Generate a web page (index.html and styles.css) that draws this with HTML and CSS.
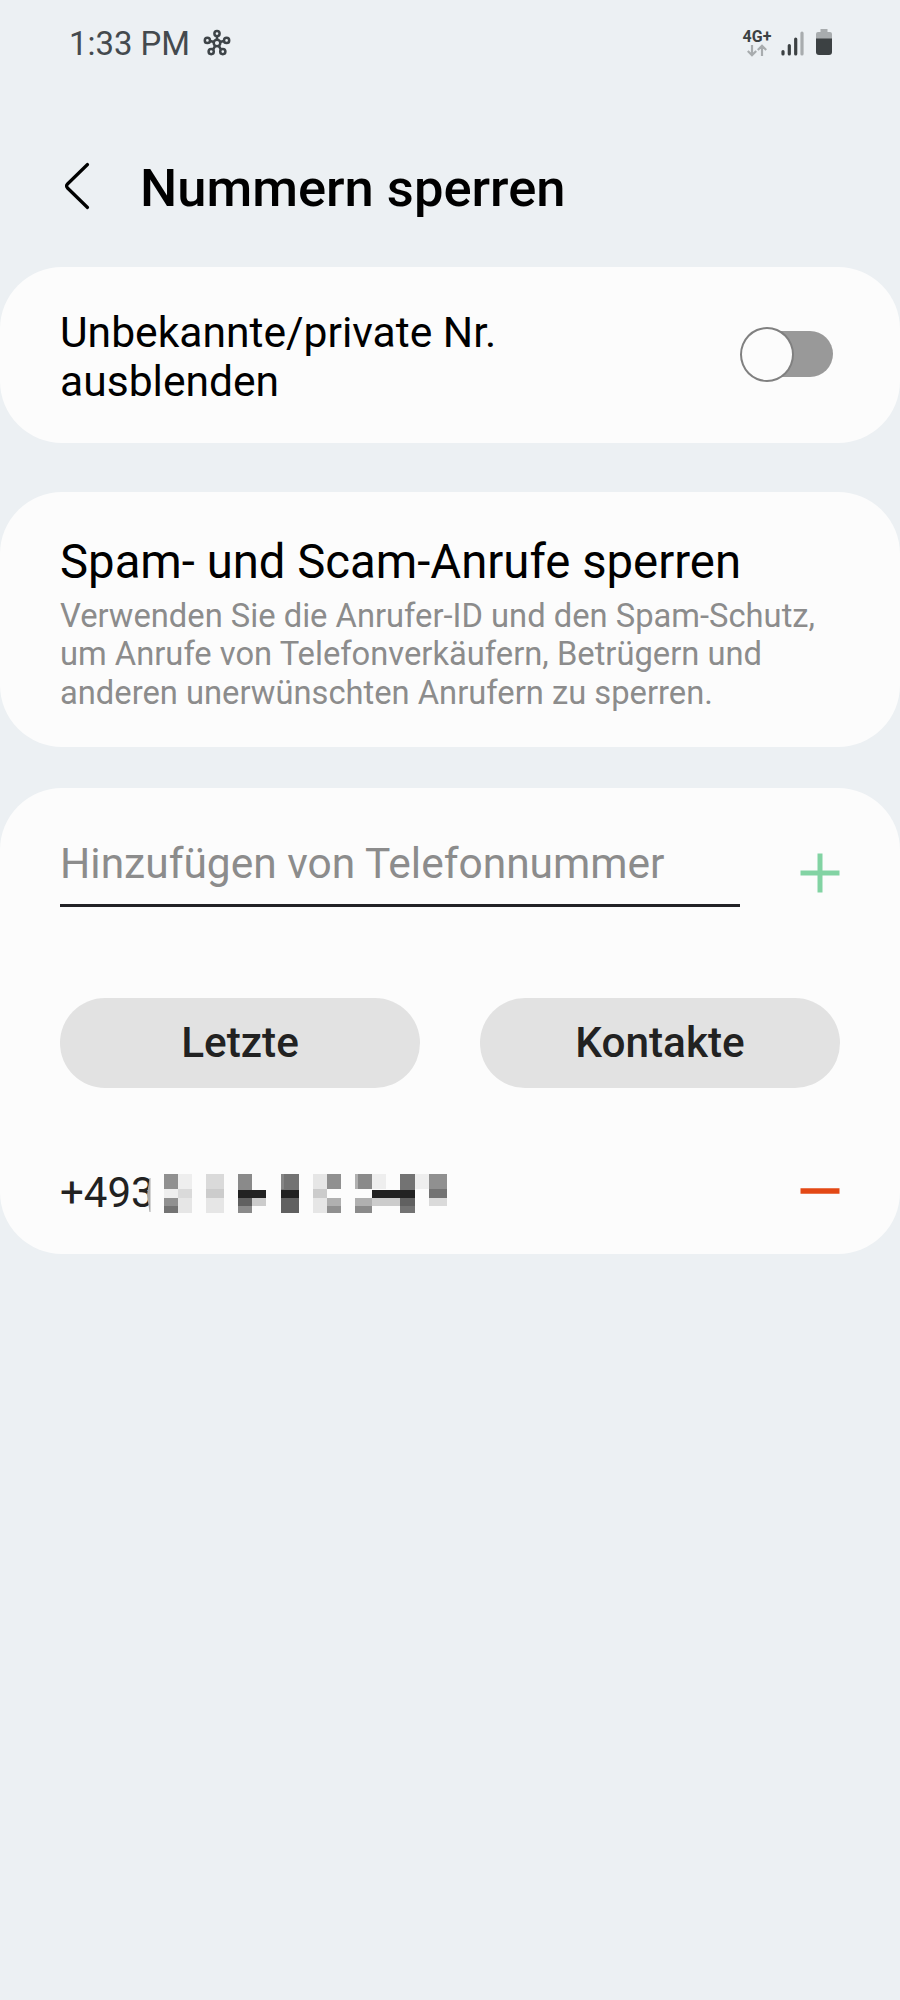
FILE: index.html
```html
<!DOCTYPE html>
<html lang="de">
<head>
<meta charset="utf-8">
<title>Nummern sperren</title>
<link rel="stylesheet" href="styles.css">
</head>
<body>
<div class="status">
  <span class="time">1:33 PM</span>
  <svg class="hub" width="28" height="28" viewBox="0 0 28 28">
    <path d="M14 11V7M11.300 13L7 12M16.700 13L21 12M12.500 16.500L10 20.500M15.500 16.500L18 20.500"/>
    <circle cx="14" cy="14" r="3.3"/><circle cx="14" cy="4.6" r="2.6"/><circle cx="4.4" cy="11.400" r="2.6"/><circle cx="23.600" cy="11.400" r="2.6"/><circle cx="8.200" cy="22.600" r="2.6"/><circle cx="19.800" cy="22.600" r="2.6"/>
  </svg>
  <div class="network">
    <span class="network-type">4G+</span>
    <svg class="arrows" width="20" height="13" viewBox="0 0 20 13"><path d="M5 1v10M.8 7L5 11.200 9.200 7M15 12V2M10.800 6L15 1.800 19.200 6"/></svg>
  </div>
  <svg class="signal" width="24" height="26" viewBox="0 0 24 26">
    <path class="on" d="M2 21.500v2.500M8.300 15.500v8.500M14.700 9v15"/><path class="off" d="M21 3v21"/>
  </svg>
  <svg class="battery" width="18" height="28" viewBox="0 0 18 28">
    <path class="cell" d="M5.500 1h7v3H15a2 2 0 0 1 2 2v5H1V6a2 2 0 0 1 2-2h2.500z"/>
    <path class="charge" d="M1 10.500h16V24a3 3 0 0 1-3 3H4a3 3 0 0 1-3-3z"/>
  </svg>
</div>
<header class="header">
  <svg class="back" width="28" height="50" viewBox="0 0 28 50"><path d="M24.500 3.500L4.500 23Q2.500 25 4.500 27L24.500 46.500"/></svg>
  <h1 class="title">Nummern sperren</h1>
</header>
<main>
  <section class="card hide-card">
    <p class="hide-label">Unbekannte/private Nr.<br>ausblenden</p>
    <div class="toggle"><div class="thumb"></div></div>
  </section>
  <section class="card spam-card">
    <h2 class="spam-title">Spam- und Scam-Anrufe sperren</h2>
    <p class="spam-text">Verwenden Sie die Anrufer-ID und den Spam-Schutz,<br>um Anrufe von Telefonverkäufern, Betrügern und<br>anderen unerwünschten Anrufern zu sperren.</p>
  </section>
  <section class="card numbers-card">
    <div class="add-row">
      <div class="field"><span class="field-text">Hinzufügen von Telefonnummer</span></div>
      <svg class="plus" width="40" height="40" viewBox="0 0 40 40"><path d="M.5 20h39M20 .5v39"/></svg>
    </div>
    <div class="buttons">
      <div class="button"><span class="letzte">Letzte</span></div>
      <div class="button"><span class="kontakte">Kontakte</span></div>
    </div>
    <div class="number-row">
      <span class="number">+493</span>
      <svg class="mosaic" width="302" height="44" viewBox="146 1172 302 44" shape-rendering="crispEdges">
        <path fill="#fcfcfc" d="M150 1172h14v44h-14z"/>
        <path fill="#aaa" shape-rendering="auto" d="M149.500 1178L147 1195L149.500 1212h1v-34z"/>
        <path fill="#909090" d="M164 1174h14v15h-14zM164 1198h14v8h-14zM327 1174h14v15h-14zM429 1174h18v15h-18zM327 1206h14v7h-14z"/>
        <path fill="#eee" d="M164 1189h14v9h-14zM178 1174h14v15h-14zM415 1174h14v15h-14zM372 1174h14v15h-14z"/>
        <path fill="#737373" d="M164 1206h14v7h-14zM281 1174h18v16h-18zM400 1174h15v16h-15zM400 1206h15v7h-15zM429 1189h18v9h-18z"/>
        <path fill="#dadada" d="M178 1189h14v9h-14zM206 1174h18v15h-18zM429 1198h18v8h-18z"/>
        <path fill="#e6e6e6" d="M178 1198h14v15h-14zM206 1198h18v15h-18zM313 1174h14v15h-14zM313 1198h14v15h-14z"/>
        <path fill="#ccc" d="M206 1189h18v9h-18zM313 1189h14v9h-14zM252 1198h14v8h-14zM372 1198h28v8h-28z"/>
        <path fill="#8a8a8a" d="M238 1174h14v16h-14zM238 1206h14v7h-14zM355 1174h17v15h-17zM355 1206h17v7h-17z"/>
        <path fill="#222" d="M238 1190h28v8h-28zM281 1190h18v8h-18zM372 1190h43v8h-43z"/>
        <path fill="#606060" d="M238 1198h14v8h-14zM281 1198h18v15h-18zM400 1198h15v8h-15z"/>
        <path fill="#b0b0b0" d="M327 1198h14v8h-14zM355 1198h17v8h-17zM355 1174h3v15h-3z"/>
        <path fill="#858585" d="M281 1174h3v15h-3z"/>
      </svg>
      <svg class="minus" width="40" height="6" viewBox="0 0 40 6"><path d="M.5 3h39"/></svg>
    </div>
  </section>
</main>
</body>
</html>
```
FILE: styles.css
```css
* { box-sizing: border-box; margin: 0; padding: 0; }
body {
  width: 900px;
  height: 2000px;
  background: #ecf0f3;
  color: #000;
  font-family: Roboto, sans-serif;
}
svg { display: block; flex: none; fill: none; }
span, h1, h2, p { white-space: nowrap; }
.status {
  display: flex;
  align-items: center;
  height: 87px;
  padding: 0 67px 0 69px;
  color: #444a4e;
}
.time { width: 120px; font-size: 32.900px; }
.hub { margin-left: 14px; margin-top: -2px; stroke: #3e4448; stroke-width: 2.5; }
.network { display: flex; flex-direction: column; align-items: center; width: 28px; margin: -2px 0 0 auto; }
.network-type { font-size: 16px; line-height: 15px; font-weight: 700; color: #3c4143; }
.arrows { stroke: #a8acae; stroke-width: 2.2; }
.signal { margin-left: 10px; margin-top: -1px; stroke-width: 3.2; stroke-linecap: round; }
.on { stroke: #3c4143; }
.off { stroke: #a8acae; }
.battery { margin-left: 10px; margin-top: -3px; }
.cell { fill: #a8acae; }
.charge { fill: #3c4143; }
.header {
  display: flex;
  align-items: center;
  height: 179.500px;
  padding: 23px 0 0 63px;
}
.back { margin-top: -4px; stroke: #000; stroke-width: 3.2; stroke-linecap: round; }
.title { margin-left: 49px; font-size: 52.500px; line-height: 60px; font-weight: 500; }
.card { background: #fcfcfc; border-radius: 62px; }
.hide-card {
  display: flex;
  align-items: center;
  justify-content: space-between;
  height: 176px;
  padding: 0 67.500px 0 60px;
}
.hide-label { padding-top: 5px; font-size: 42.600px; line-height: 49px; }
.toggle {
  display: flex;
  align-items: center;
  width: 86px;
  height: 46px;
  margin-top: -1px;
  border-radius: 23px;
  background: #999;
}
.thumb {
  width: 54px;
  height: 55px;
  margin-left: -7px;
  flex: none;
  border: 2px solid #808080;
  border-radius: 50%;
  background: #fcfcfc;
}
.spam-card { height: 255px; margin-top: 49.500px; padding: 42px 60px 0; }
.spam-title { font-size: 47.300px; font-weight: 400; line-height: 56px; }
.spam-text { margin-top: 7px; font-size: 32.720px; line-height: 38.400px; color: #8c8c8c; }
.numbers-card { height: 466.500px; margin-top: 40.500px; padding: 48px 60px 0; }
.add-row { display: flex; align-items: center; justify-content: space-between; height: 71px; }
.field { width: 680px; height: 71px; border-bottom: 3px solid #222226; }
.field-text { display: block; font-size: 42.500px; line-height: 55px; color: #8c8c8c; }
.plus { margin-top: 3px; stroke: #82d3a3; stroke-width: 5; }
.buttons { display: flex; gap: 60px; margin-top: 91px; }
.button {
  display: flex;
  align-items: center;
  justify-content: center;
  width: 360px;
  height: 90px;
  border-radius: 45px;
  background: #e2e2e2;
  color: #222;
  font-size: 42.300px;
  font-weight: 500;
}
.number-row { display: flex; align-items: center; height: 60px; margin-top: 76px; color: #222; }
.number { width: 90px; margin-top: -2px; font-size: 42px; line-height: 60px; }
.mosaic { margin-left: -4px; z-index: 1; }
.minus { margin: -5px 0 0 auto; stroke: #e34815; stroke-width: 5.500; }
```
